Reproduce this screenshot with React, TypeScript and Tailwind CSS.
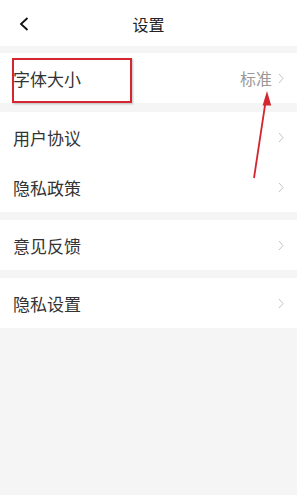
import React from 'react';

const font = { fontFamily: '"Noto Sans CJK SC", "Noto Sans", sans-serif' };

const Chevron = () => (
  <svg width="6" height="11" viewBox="0 0 6 11" className="shrink-0">
    <path d="M1 1l4 4.5-4 4.5" fill="none" stroke="#c4c4c4" strokeWidth="1" />
  </svg>
);

const Row = ({ label, value }: { label: string; value?: string }) => (
  <div className="flex h-[50px] items-center justify-between bg-white pl-[13px] pr-[13px]">
    <span className="text-[17px] leading-none text-[#333]">{label}</span>
    <div className="flex items-center gap-[6px]">
      {value && <span className="text-[16px] leading-none text-[#999]">{value}</span>}
      <Chevron />
    </div>
  </div>
);

export default function App() {
  return (
    <div className="relative min-h-[495px] w-[297px] overflow-hidden bg-[#f5f5f5]" style={font}>
      {/* Header */}
      <div className="relative flex h-[46px] items-center justify-center bg-white">
        <svg width="10" height="14" viewBox="0 0 10 14" className="absolute left-[19px] top-[17px]">
          <path d="M8.5 1L2 7l6.5 6" fill="none" stroke="#111" strokeWidth="1.8" />
        </svg>
        <span className="pt-[2px] text-[16px] text-[#222]">设置</span>
      </div>

      <div className="mt-[7px]">
        <Row label="字体大小" value="标准" />
      </div>
      <div className="mt-[9px]">
        <Row label="用户协议" />
        <Row label="隐私政策" />
      </div>
      <div className="mt-[8px]">
        <Row label="意见反馈" />
      </div>
      <div className="mt-[8px]">
        <Row label="隐私设置" />
      </div>

      {/* Annotation overlay */}
      <div className="pointer-events-none absolute left-[12px] top-[58px] h-[45px] w-[120px] border-2 border-[#d42630] shadow-[1px_1px_2px_rgba(0,0,0,0.25)]" />
      <svg className="pointer-events-none absolute left-0 top-0" width="297" height="495">
        <line x1="254" y1="178" x2="265.5" y2="102" stroke="#d42630" strokeWidth="1.8" />
        <path d="M267 91l4.2 14.5h-8.6z" fill="#d42630" />
      </svg>
    </div>
  );
}
